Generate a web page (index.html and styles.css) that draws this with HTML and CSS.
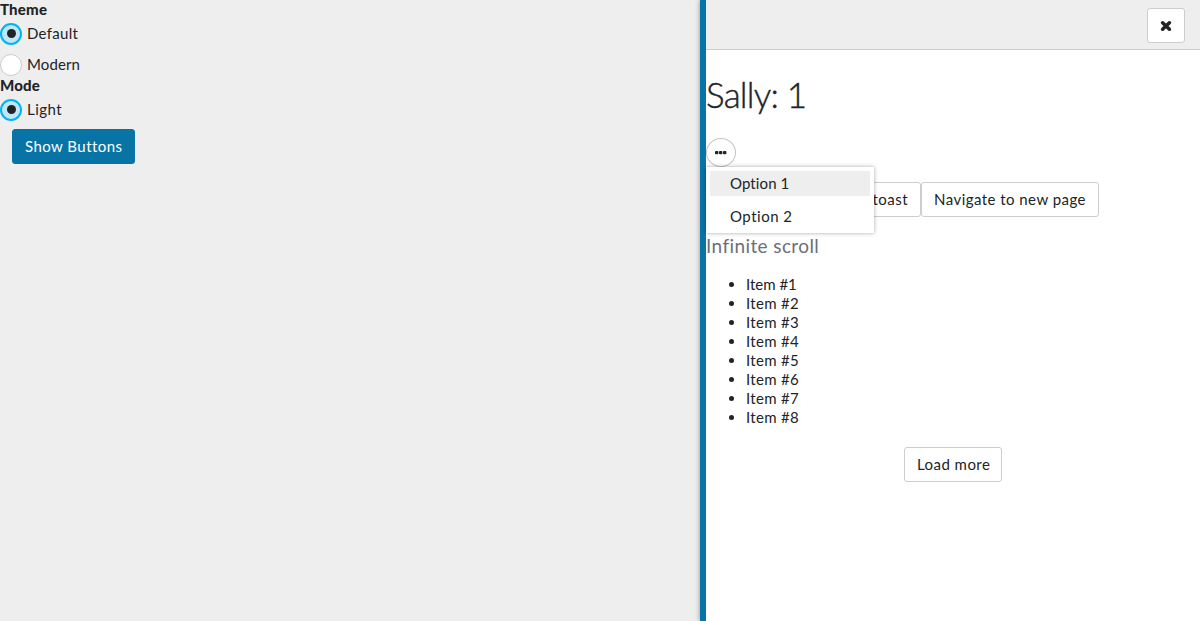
FILE: index.html
```html
<!DOCTYPE html>
<html lang="en">
<head>
<meta charset="utf-8">
<title>Sally: 1</title>
<link rel="stylesheet" href="styles.css">
</head>
<body>
<div class="app">
  <aside class="settings">
    <div class="legend">Theme</div>
    <label class="choice"><span class="radio checked"></span><span>Default</span></label>
    <label class="choice"><span class="radio"></span><span class="modern">Modern</span></label>
    <div class="legend">Mode</div>
    <label class="choice"><span class="radio checked"></span><span class="light">Light</span></label>
    <button class="button primary">Show Buttons</button>
  </aside>
  <main class="panel">
    <header class="bar">
      <button class="button close" aria-label="Close">
        <svg width="12" height="12" viewBox="0 0 12 12"><path d="M2.6 2.8L9.4 9.2M9.4 2.8L2.6 9.2" stroke="#212427" stroke-width="3.6" stroke-linecap="round"/></svg>
      </button>
    </header>
    <h1>Sally: 1</h1>
    <div class="dropdown">
      <button class="more" aria-label="More">
        <svg width="12" height="4" viewBox="0 0 12 4" fill="#212427"><rect x="0" y="0" width="3.4" height="3.2" rx=".9"/><rect x="4" y="0" width="3.4" height="3.2" rx=".9"/><rect x="8" y="0" width="3.4" height="3.2" rx=".9"/></svg>
      </button>
      <div class="menu">
        <div class="option active">Option 1</div>
        <div class="option">Option 2</div>
      </div>
    </div>
    <div class="actions">
      <button class="button toast">toast</button>
      <button class="button navigate">Navigate to new page</button>
    </div>
    <h2>Infinite scroll</h2>
    <ul>
      <li class="first">Item #1</li>
      <li>Item #2</li>
      <li>Item #3</li>
      <li>Item #4</li>
      <li>Item #5</li>
      <li>Item #6</li>
      <li>Item #7</li>
      <li>Item #8</li>
    </ul>
    <button class="button load">Load more</button>
  </main>
</div>
</body>
</html>
```
FILE: styles.css
```css
* { box-sizing: border-box; }
body {
  margin: 0;
  background: #eee;
  color: #212427;
  font: 15px/19px Lato, "Open Sans", sans-serif;
  letter-spacing: .3px;
}
.app { display: flex; height: 621px; overflow: hidden; }
.settings { width: 700px; }
.legend { height: 19px; font-weight: 900; letter-spacing: .2px; }
.choice { display: flex; align-items: center; gap: 5px; height: 22px; margin-top: 4px; line-height: 17px; }
.choice > span:last-child { padding-bottom: 2px; }
.choice + .choice { margin-top: 9px; }
.modern { letter-spacing: .1px; }
.light { letter-spacing: .5px; }
.radio {
  display: flex;
  width: 22px;
  height: 22px;
  border: 1px solid #ccc;
  border-radius: 50%;
  background: #fff;
}
.radio.checked {
  align-items: center;
  justify-content: center;
  border: 2px solid #00b3f4;
  background: #c0e6fa;
}
.radio.checked::before { content: ""; width: 9px; height: 9px; margin: 0 0 1px 1px; border-radius: 50%; background: #212427; }
.button {
  height: 35px;
  padding: 0 12px;
  border: 1px solid #cdcdd1;
  border-radius: 3px;
  background: #fff;
  color: #212427;
  font: inherit;
  letter-spacing: .45px;
  white-space: nowrap;
}
.primary { display: block; width: 123px; margin: 8px 0 0 12px; border-color: #0874a5; background: #0874a5; color: #fff; }
.panel {
  flex: 1;
  border-left: 6px solid #0874a5;
  background: #fff;
  box-shadow: 0 0 5px rgba(0, 0, 0, .4);
}
.bar {
  display: flex;
  justify-content: flex-end;
  height: 50px;
  padding: 8px 15px 0 0;
  border-bottom: 1px solid #ccc;
  background: #eee;
}
.close { display: flex; align-items: center; justify-content: center; width: 38px; padding: 0; }
h1 {
  height: 44px;
  margin: 22px 0;
  font-size: 35px;
  font-weight: 300;
  line-height: 44px;
  letter-spacing: -.8px;
  -webkit-text-stroke: .4px #212427;
}
.dropdown { position: relative; height: 44px; }
.more {
  display: flex;
  align-items: center;
  justify-content: center;
  width: 30px;
  height: 29px;
  padding: 0;
  border: 1px solid #c4c4c6;
  border-radius: 50%;
  background: #fff;
}
.menu {
  position: absolute;
  top: 29px;
  left: 0;
  width: 168px;
  height: 66px;
  padding: 4px;
  background: #fff;
  box-shadow: 0 0 4px rgba(0, 0, 0, .35);
}
.option { height: 25px; margin-bottom: 8px; padding-left: 20px; line-height: 25px; letter-spacing: .5px; }
.option.active { background: #eee; letter-spacing: .1px; }
.actions { display: flex; height: 35px; }
.toast { width: 215px; text-align: right; }
.navigate { width: 178px; }
h2 { height: 24px; margin: 17px 0; color: #6c6f76; font-size: 19px; font-weight: 400; line-height: 24px; letter-spacing: .4px; }
ul { height: 152px; margin: 0 0 20px; padding-left: 40px; }
.first { letter-spacing: 0; }
.load { display: block; width: 98px; margin: 0 auto; }
```
